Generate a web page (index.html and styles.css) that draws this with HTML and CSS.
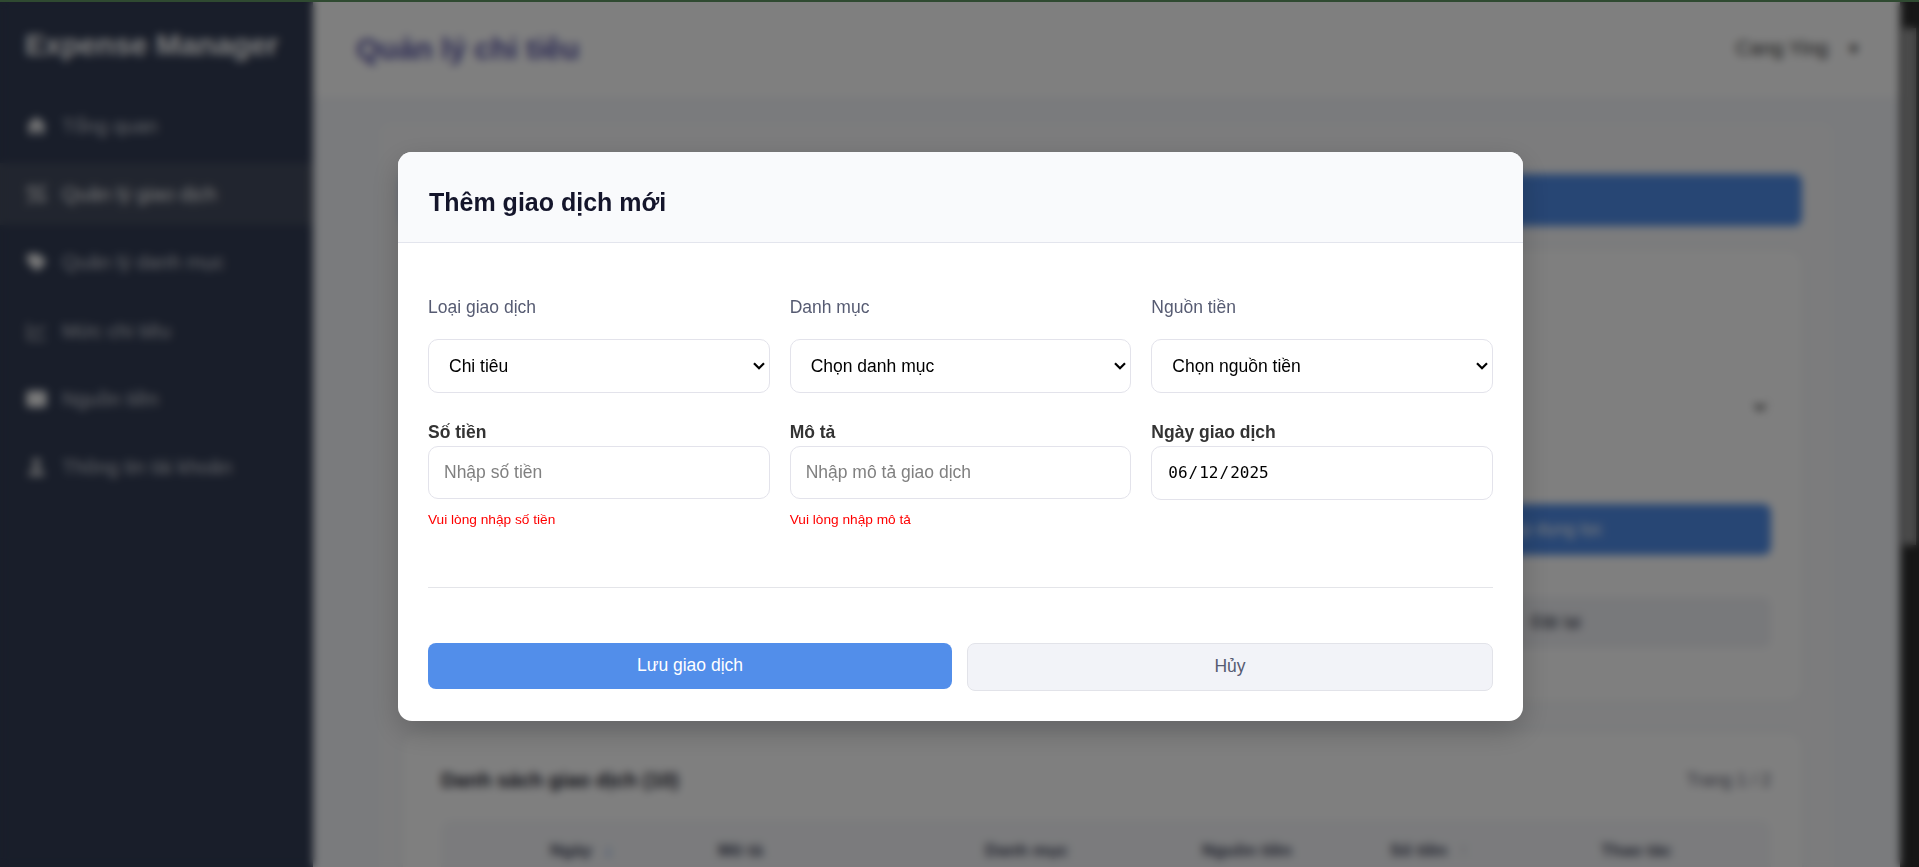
FILE: index.html
```html
<!DOCTYPE html>
<html lang="vi">
<head>
<meta charset="utf-8">
<title>Expense Manager</title>
<link rel="stylesheet" href="styles.css">
</head>
<body>
<div class="app">
  <aside class="sidebar">
    <div class="brand">Expense Manager</div>
    <nav class="nav">
      <a class="nav-item"><svg class="icon" viewBox="0 0 24 24"><path d="M12 2 1 12h3v9h6v-6h4v6h6v-9h3z"/></svg>Tổng quan</a>
      <a class="nav-item active"><svg class="icon line" viewBox="0 0 24 24"><path d="M4 12V5h8M21 2 3 22M20 12v7h-8"/></svg>Quản lý giao dịch</a>
      <a class="nav-item"><svg class="icon" viewBox="0 0 24 24"><path d="M2 3v9l9 9h3l8-8v-3l-8-7z"/></svg>Quản lý danh mục</a>
      <a class="nav-item"><svg class="icon line thin" viewBox="0 0 24 24"><path d="M3 3v18h19M6 14l5-5 4 4 6-7"/></svg>Mức chi tiêu</a>
      <a class="nav-item"><svg class="icon" viewBox="0 0 24 24"><rect x="1" y="3" width="22" height="18" rx="3"/></svg>Nguồn tiền</a>
      <a class="nav-item dim"><svg class="icon" viewBox="0 0 24 24"><circle cx="12" cy="7" r="5"/><path d="M3 22c0-6 4-9 9-9s9 3 9 9z"/></svg>Thông tin tài khoản</a>
    </nav>
  </aside>
  <div class="page">
    <header class="topbar">
      <h1 class="page-title">Quản lý chi tiêu</h1>
      <div class="user">Cang Ying <span class="caret">▼</span></div>
    </header>
    <main class="panel">
      <div class="add-btn"></div>
      <section class="card filters">
        <div class="filter-select"><svg class="chev" viewBox="0 0 12 8"><path d="M1 1.5 6 6.5l5-5"/></svg></div>
        <div class="filter-actions">
          <div class="filter-apply">Áp dụng lọc</div>
          <div class="filter-reset">Đặt lại</div>
        </div>
      </section>
      <section class="card list">
        <div class="list-head"><h2>Danh sách giao dịch (10)</h2><span>Trang 1 / 2</span></div>
        <div class="table-head">
          <span>Ngày <i class="sort">↓</i></span><span>Mô tả</span><span>Danh mục</span><span>Nguồn tiền</span><span>Số tiền <i class="sort off">↑</i></span><span>Thao tác</span>
        </div>
      </section>
    </main>
  </div>
  <div class="scrollbar"><div class="thumb"></div></div>
</div>
<div class="overlay">
  <div class="modal">
    <div class="modal-head"><h2>Thêm giao dịch mới</h2></div>
    <form class="modal-body">
      <div class="fields">
        <div class="field">
          <label class="soft">Loại giao dịch</label>
          <div class="select-box"><select><option>Chi tiêu</option></select><svg class="chev" viewBox="0 0 12 8"><path d="M1 1.2 6 6.2l5-5"/></svg></div>
        </div>
        <div class="field">
          <label class="soft">Danh mục</label>
          <div class="select-box"><select><option>Chọn danh mục</option></select><svg class="chev" viewBox="0 0 12 8"><path d="M1 1.2 6 6.2l5-5"/></svg></div>
        </div>
        <div class="field">
          <label class="soft">Nguồn tiền</label>
          <div class="select-box"><select><option>Chọn nguồn tiền</option></select><svg class="chev" viewBox="0 0 12 8"><path d="M1 1.2 6 6.2l5-5"/></svg></div>
        </div>
        <div class="field">
          <label>Số tiền</label>
          <input type="text" placeholder="Nhập số tiền">
          <span class="error">Vui lòng nhập số tiền</span>
        </div>
        <div class="field">
          <label>Mô tả</label>
          <input type="text" placeholder="Nhập mô tả giao dịch">
          <span class="error">Vui lòng nhập mô tả</span>
        </div>
        <div class="field">
          <label>Ngày giao dịch</label>
          <input type="date" lang="en-US" value="2025-06-12">
        </div>
      </div>
      <div class="actions">
        <button type="button" class="save">Lưu giao dịch</button>
        <button type="button" class="cancel">Hủy</button>
      </div>
    </form>
  </div>
</div>
<div class="topline"></div>
</body>
</html>
```
FILE: styles.css
```css
* { box-sizing: border-box; }
body {
  margin: 0;
  height: 867px;
  overflow: hidden;
  font-family: "Liberation Sans", Arial, sans-serif;
  font-size: 17.6px;
  color: #333;
}
h1, h2 { margin: 0; }

.app { display: flex; height: 867px; overflow: hidden; background: #f4f6fa; }

/* Sidebar */
.sidebar { width: 313px; flex: none; background: #323c54; color: #c4c7cf; }
.brand { height: 95px; padding: 27px 0 0 25px; font-size: 29.8px; line-height: 36px; font-weight: 700; color: #fff; white-space: nowrap; }
.nav { display: flex; flex-direction: column; gap: 6px; }
.nav-item { display: flex; align-items: center; gap: 14px; height: 62.2px; padding: 0 25px; font-size: 20px; line-height: 24px; white-space: nowrap; }
.nav-item.active { background: #434b5e; color: #f4f4f4; }
.icon { width: 23px; height: 22px; flex: none; fill: #f4f4f4; }
.icon.line { fill: none; stroke: #e8e8e8; stroke-width: 3; }
.icon.thin { stroke: #a9acb5; stroke-width: 2.5; }
.dim .icon { fill: #bfc1c6; }

/* Page */
.page { flex: 1; min-width: 0; }
.topbar { display: flex; align-items: center; justify-content: space-between; height: 97px; padding: 0 39px 0 43px; background: #fff; }
.page-title { font-size: 30px; color: #5654a6; }
.user { display: flex; align-items: center; gap: 18px; font-size: 20px; color: #333; }
.caret { font-size: 15px; }
.panel { margin: 25px 66px 0; height: 800px; padding: 52px 32px 0 24px; border-radius: 12px; background: #f8f9fb; }
.add-btn { height: 52px; border-radius: 8px; background: #4f8ce8; }
.card { border-radius: 14px; background: #fff; box-shadow: 0 0 10px rgba(0, 0, 0, 0.05); }
.filters { margin-top: 24px; height: 451px; padding: 130px 31px 0 36px; }
.filter-select { display: flex; align-items: center; justify-content: flex-end; height: 53px; padding-right: 4px; border: 1px solid #f0f0f2; border-radius: 10px; }
.chev { width: 12px; height: 8px; fill: none; stroke: #000; stroke-width: 2.2; }
.filter-actions { width: 430px; margin: 71px 0 0 auto; }
.filter-apply, .filter-reset { height: 51px; border-radius: 8px; line-height: 50px; text-align: center; }
.filter-apply { background: #4f8ce8; color: #fff; }
.filter-reset { margin-top: 42px; background: #f1f2f6; color: #333849; }
.list { margin-top: 32px; height: 220px; padding: 31px 31px 0 38px; }
.list-head { display: flex; justify-content: space-between; align-items: center; height: 32px; }
.list-head h2 { font-size: 20.2px; color: #1b1c2c; }
.list-head span { color: #5d6172; }
.table-head { display: grid; grid-template-columns: 168px 267px 217px 188px 211px 1fr; margin-top: 24px; height: 60px; padding-left: 109px; border-radius: 10px 10px 0 0; background: #f6f7fa; font-size: 17.2px; font-weight: 700; line-height: 60px; color: #3d4358; }
.sort { margin-left: 7px; font-size: 18px; font-style: normal; color: #3574dc; }
.sort.off { color: #b0b5c2; }
.scrollbar { width: 19px; padding: 28px 3px 0; background: #2c2c2c; flex: none; }
.thumb { height: 517px; background: #9f9f9f; }

/* Dialog */
.overlay { position: fixed; inset: 0; display: flex; align-items: flex-start; justify-content: center; padding: 152px 0 0 2px; background: rgba(0, 0, 0, 0.5); backdrop-filter: blur(4px); }
.modal { width: 1125px; height: 569px; border-radius: 14px; overflow: hidden; background: #fff; box-shadow: 0 10px 30px rgba(0, 0, 0, 0.2); }
.modal-head { height: 91px; padding: 32px 31px 0; border-bottom: 1px solid #e3e5ed; background: #f9fafc; }
.modal-head h2 { font-size: 25px; line-height: 36px; color: #14152b; }
.modal-body { padding: 51px 30px 0; }
.fields { display: grid; grid-template-columns: repeat(3, 1fr); gap: 26px 20px; height: 293px; align-content: start; }
.field { display: flex; flex-direction: column; }
.field label { font-size: 17.5px; line-height: 27px; font-weight: 700; color: #333; }
.field label.soft { margin-bottom: 18px; font-weight: 400; color: #565b72; }
select, input { width: 100%; border: 1px solid #e3e3eb; border-radius: 10px; background: #fff; font-family: inherit; font-size: 17.5px; color: #000; }
.select-box { display: grid; align-items: center; }
.select-box > * { grid-area: 1 / 1; }
.select-box .chev { justify-self: end; margin-right: 5px; pointer-events: none; }
select { appearance: none; height: 54px; padding: 0 24px 0 20px; }
input { height: 53px; padding: 0 15px 1px; }
input::placeholder { color: #808080; }
input[type="date"] { height: 54px; font-family: "DejaVu Sans Mono", monospace; font-size: 16px; }
input::-webkit-calendar-picker-indicator { display: none; }
.error { margin-top: 11px; font-size: 13.7px; line-height: 20px; color: #f00; }
.actions { display: flex; align-items: flex-start; gap: 15px; padding-top: 55px; border-top: 1px solid #e4e5e9; }
.actions button { flex: 1; border-radius: 8px; font-family: inherit; font-size: 17.5px; padding: 0 0 2px; }
.actions .save { height: 46px; border: 0; background: #528eea; color: #fff; }
.actions .cancel { height: 48px; border: 1px solid #e2e3e9; background: #f2f3f8; color: #565b72; }

.topline { position: fixed; top: 0; left: 0; right: 0; height: 2px; background: #2f4a31; }
```
